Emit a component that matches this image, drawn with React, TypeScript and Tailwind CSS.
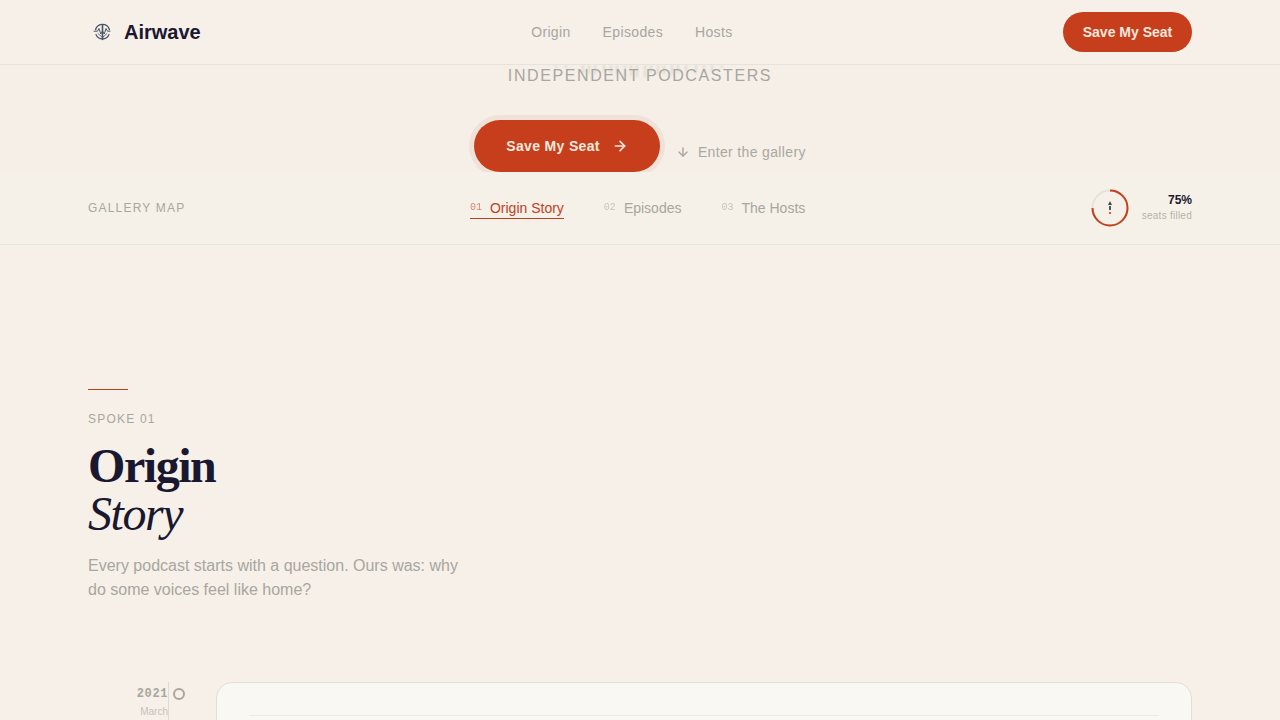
import { ArrowDown, ArrowRight } from "lucide-react";

interface ISpoke {
  number: string;
  label: string;
  href: string;
}

const spokes: ISpoke[] = [
  { number: "01", label: "Origin Story", href: "#origin" },
  { number: "02", label: "Episodes", href: "#episodes" },
  { number: "03", label: "The Hosts", href: "#hosts" },
];

const Logo = () => (
  <svg className="h-7 w-7" viewBox="0 0 28 28" fill="none" stroke="#4a5568" strokeLinecap="round" aria-hidden="true">
    <path d="M7.6 11.500a7.200 7.200 0 0 1 13.800 0" strokeWidth="1.400" />
    <path d="M8 16.500a7 7 0 0 0 13 0" strokeWidth="1.200" />
    <path d="M14.500 7.500v14" strokeWidth="1.600" />
    <path d="M6 13.200h3.500l1.500-2.700 1.800 5.500 1.700-3 1.700 3 1.800-5.500 1.500 2.700H22" strokeWidth="1" />
    <path d="M10 15.500l4.500 4 4.500-4" strokeWidth="0.800" />
  </svg>
);

const Header = () => (
  <header className="relative z-20 border-b border-[#e7e2dc] bg-[#f6f0e9]">
    <div className="mx-auto flex h-16 max-w-6xl items-center justify-between px-6">
      <a href="#top" className="flex items-center gap-2 text-xl font-bold text-[#1a1730]">
        <Logo />
        Airwave
      </a>
      <nav className="flex gap-8 text-sm tracking-wide text-[#a8a69f]">
        <a href="#origin">Origin</a>
        <a href="#episodes">Episodes</a>
        <a href="#hosts">Hosts</a>
      </nav>
      <button className="h-10 w-[129px] rounded-full bg-[#c63e1b] text-sm font-bold text-[#fbe9df]">
        Save My Seat
      </button>
    </div>
  </header>
);

// faint waveform that shows through under the header
const Echo = () => (
  <svg className="absolute inset-x-0 top-0 mx-auto h-3 w-44 blur-[1px]" viewBox="0 0 176 12" stroke="#dedad2" aria-hidden="true">
    <path d="M4 0v3M14 0v3M31 0v8M37 0v9M43 0v9M52 0v7M59 0v9M65 0v10M73 0v13M79 0v11M85 0v13M93 0v12M99 0v8M106 0v9M112 0v9M120 0v10M126 0v8M134 0v6M144 0v9M152 0v6M160 0v7M170 0v3" strokeWidth="2" />
  </svg>
);

const Hero = () => (
  <section className="relative flex flex-col items-center overflow-hidden bg-[#f5efe8]">
    <Echo />
    <p className="relative mt-px text-base leading-5 tracking-widest text-[#a8a69f] uppercase">
      Independent podcasters
    </p>
    <div className="mt-[34px] flex items-start gap-4">
      <button className="flex h-[52px] items-center gap-3 rounded-full bg-[#c63e1b] px-8 text-sm font-bold tracking-wide text-[#fbe9df] shadow-[0_0_0_5px_#f0e2d9]">
        Save My Seat
        <ArrowRight size={16} strokeWidth={2.5} />
      </button>
      <a href="#origin" className="mt-[22px] flex items-center gap-2 text-sm tracking-wide text-[#aaa8a1]">
        <ArrowDown size={14} strokeWidth={2.5} />
        Enter the gallery
      </a>
    </div>
  </section>
);

const SeatsRing = () => (
  <svg className="h-10 w-10" viewBox="0 0 40 40" fill="none" aria-hidden="true">
    <circle cx="20" cy="20" r="17.500" stroke="#e6e2da" strokeWidth="2" />
    <circle
      cx="20"
      cy="20"
      r="17.500"
      stroke="#c0401f"
      strokeWidth="2"
      pathLength="100"
      strokeDasharray="75 25"
      transform="rotate(-90 20 20)"
    />
    <path d="M20 13l2 4h-4z" fill="#44444c" />
    <path d="M20 18v4" stroke="#44444c" strokeWidth="1.800" />
    <circle cx="20" cy="25" r="1.100" fill="#c0401f" />
  </svg>
);

const GalleryMap = () => (
  <div className="border-b border-[#eae6dd] bg-[#f5f1e8]">
    <div className="mx-auto flex h-[72px] max-w-6xl items-center justify-between px-6">
      <span className="text-xs tracking-widest text-[#a8a69f] uppercase">Gallery map</span>
      <nav className="flex gap-10 text-sm">
        {spokes.map((spoke, index) => (
          <a
            key={spoke.number}
            href={spoke.href}
            className={`flex gap-2 border-b pt-px ${index === 0 ? "border-[#c0401f] text-[#c0401f]" : "border-transparent text-[#a8a69f]"}`}
          >
            <span className="font-['Liberation_Mono',monospace] text-[10px] leading-5 opacity-60">{spoke.number}</span>
            {spoke.label}
          </a>
        ))}
      </nav>
      <div className="flex items-center justify-end gap-3">
        <SeatsRing />
        <div className="text-right">
          <div className="text-xs leading-4 font-bold text-[#1a1730]">75%</div>
          <div className="text-[10px] leading-4 tracking-wide text-[#b5b2ab]">seats filled</div>
        </div>
      </div>
    </div>
  </div>
);

const OriginStory = () => (
  <section id="origin" className="mx-auto max-w-6xl px-6 pt-36">
    <div className="h-px w-10 bg-[#c0401f]" />
    <p className="mt-[21px] text-xs leading-4 tracking-widest text-[#a8a69f] uppercase">Spoke 01</p>
    <h2 className="mt-[15px] font-['Liberation_Serif',serif] text-5xl leading-12 font-bold tracking-[-0.03em] text-[#1a1730]">
      Origin
      <em className="block font-normal">Story</em>
    </h2>
    <p className="mt-4 max-w-96 text-base text-[#a8a69f]">
      Every podcast starts with a question. Ours was: why do some voices feel like home?
    </p>

    <div className="mt-20 flex">
      <div className="w-20 text-right">
        <div className="pt-1 font-['Liberation_Mono',monospace] text-xs font-bold tracking-wider text-[#a8a69f]">2021</div>
        <div className="mt-[2px] text-[10px] leading-4 text-[#c5c1ba]">March</div>
      </div>
      <div className="w-12 border-l border-[#dedad3] pt-[6px] pl-1">
        <div className="h-3 w-3 rounded-full border-2 border-[#a8a69f]" />
      </div>
      <article className="h-80 flex-1 rounded-2xl border border-[#e0dfd8] bg-[#f9f8f3] px-8 pt-8">
        <hr className="border-[#ecebe5]" />
      </article>
    </div>
  </section>
);

const App = () => {
  return (
    <div id="top" className="h-screen overflow-hidden bg-[#f6f0e9] font-['Liberation_Sans',sans-serif]">
      <Header />
      <Hero />
      <GalleryMap />
      <OriginStory />
    </div>
  );
};

export default App;
